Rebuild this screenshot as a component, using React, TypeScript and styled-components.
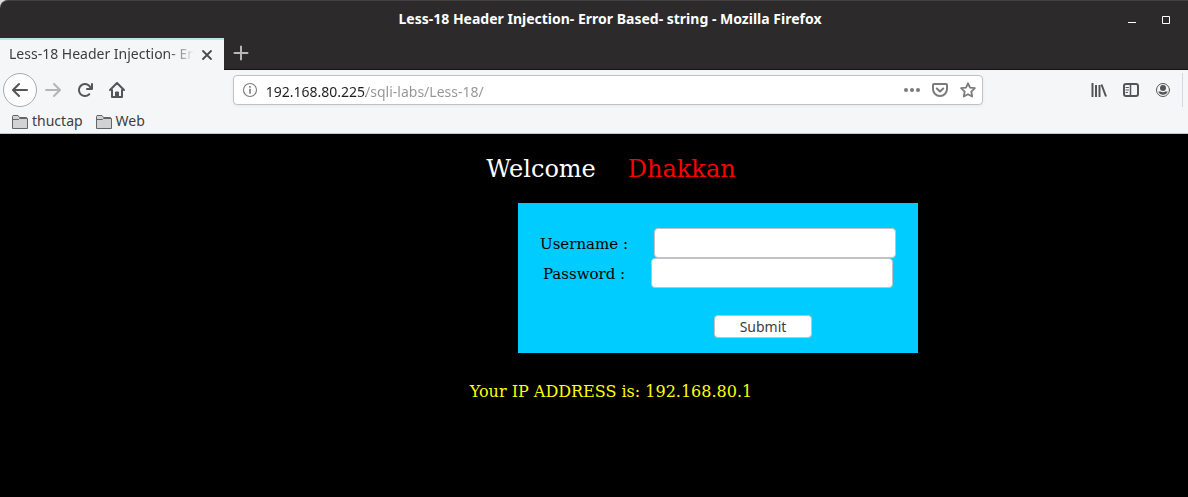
import React from "react";
import styled, { createGlobalStyle } from "styled-components";

const GlobalStyle = createGlobalStyle`
  * { box-sizing: border-box; }
  html, body, #root { min-height: 100vh; }
  body { margin: 0; background: #000; }
  button, input { font: inherit; margin: 0; }
`;

const Browser = styled.div`
  display: flex;
  flex-direction: column;
  min-height: 100vh;
  font-family: "Noto Sans", "Open Sans", sans-serif;
  font-size: 14px;
  line-height: 20px;
  color: #3d3d3d;
`;

const TitleBacking = styled.div`
  background: #dcdcdc;
`;

const TitleBar = styled.header`
  display: grid;
  grid-template-columns: 1fr auto 1fr;
  align-items: center;
  height: 38px;
  padding: 0 12px 0 44px;
  background: #2c2a2b;
  border-top: 1px solid #434142;
  border-top-left-radius: 8px;
`;

const WindowTitle = styled.h1`
  grid-column: 2;
  margin: 0;
  padding-bottom: 2px;
  font-size: 14px;
  line-height: 20px;
  font-weight: 700;
  color: #fff;
`;

const WindowControls = styled.div`
  display: flex;
  justify-content: flex-end;
  gap: 14px;
`;

const PlainButton = styled.button`
  display: inline-flex;
  align-items: center;
  justify-content: center;
  padding: 0;
  border: 0;
  background: none;
  color: inherit;
`;

const WindowButton = styled(PlainButton)`
  width: 20px;
  height: 20px;
  color: #fff;
`;

const TabStrip = styled.div`
  display: flex;
  height: 32px;
  background: #2c2a2b;
  box-shadow: inset 0 -1px #121212;
`;

const Tab = styled.div`
  display: flex;
  align-items: center;
  width: 224px;
  padding: 0 9px;
  gap: 4px;
  background: #f5f6f8;
  border-top: 2px solid #b5e4f2;
`;

const TabLabel = styled.span`
  flex: 1;
  overflow: hidden;
  padding-bottom: 2px;
  white-space: nowrap;
  mask-image: linear-gradient(to left, transparent, #000 28px);
`;

const TabButton = styled(PlainButton)`
  width: 16px;
  height: 16px;
  color: #4a4a4a;
`;

const NewTabButton = styled(PlainButton)`
  width: 34px;
  height: 30px;
  color: #b9b8b8;
`;

const NavBar = styled.nav`
  display: flex;
  align-items: center;
  height: 40px;
  padding: 0 5px 0 3px;
  background: #f5f6f8;
`;

const ToolButton = styled(PlainButton)<{ $muted?: boolean }>`
  flex: none;
  width: 32px;
  height: 32px;
  color: ${(p) => (p.$muted ? "#b4b5b6" : "#555557")};
`;

const BackButton = styled(ToolButton)`
  width: 34px;
  height: 34px;
  border: 1px solid #a9aaac;
  border-radius: 50%;
  background: #fdfdfd;
`;

const Spacer = styled.div`
  flex: 2;
`;

const AddressBar = styled.div`
  flex: 15;
  display: flex;
  align-items: center;
  height: 30px;
  margin: 0 1px;
  padding: 0 0 0 8px;
  background: #fff;
  border: 1px solid #c0c1c5;
  border-radius: 4px;
  box-shadow: 0 1px 3px rgba(0, 0, 0, 0.06);
`;

const AddressInput = styled.input`
  flex: 1;
  min-width: 0;
  height: 22px;
  padding: 2px 8px 0;
  border: 0;
  outline: 0;
  color: transparent;
  caret-color: #222;
  background: linear-gradient(to right, #1f1f1f 108px, #949494 108px);
  background-clip: text;
`;

const AddressButton = styled(PlainButton)`
  width: 28px;
  height: 28px;
  color: #7b7b7c;
`;

const InfoButton = styled(AddressButton)`
  width: 16px;
`;

const ToolbarEdge = styled.div`
  width: 1px;
  height: 34px;
  margin-left: 3px;
  background: #d5d6d9;
`;

const BookmarkBar = styled.div`
  display: flex;
  gap: 13px;
  height: 24px;
  padding: 0 12px;
  background: #f5f6f8;
  border-bottom: 1px solid #c4c5c7;
`;

const Bookmark = styled.a`
  display: flex;
  align-items: center;
  gap: 4px;
  color: #3d3d3d;
  text-decoration: none;
`;

const BookmarkName = styled.span`
  padding-bottom: 2px;
`;

const Page = styled.main`
  flex: 1;
  display: flex;
  flex-direction: column;
  align-items: center;
  padding: 21px 0 20px 34px;
  background: #000;
  font-family: "DejaVu Serif", serif;
  font-size: 16px;
`;

const Greeting = styled.h2`
  display: flex;
  gap: 32px;
  margin: 0;
  font-size: 24px;
  line-height: 28px;
  font-weight: 400;
  color: #fff;
`;

const Name = styled.span`
  color: #f00;
`;

const LoginForm = styled.form`
  display: flex;
  flex-direction: column;
  align-items: center;
  width: 400px;
  height: 150px;
  margin: 20px 0 29px 214px;
  padding-top: 25px;
  background: #0cf;
  color: #000;
  font-size: 15px;
`;

const Field = styled.div`
  display: flex;
  align-items: center;
  gap: 26px;
  height: 30px;
`;

const FieldLabel = styled.label`
  padding-top: 2px;
`;

const FieldInput = styled.input`
  width: 242px;
  height: 30px;
  padding: 0 8px;
  background: #fff;
  border: 1px solid #c2c2c6;
  border-radius: 4px;
`;

const SubmitButton = styled.button`
  width: 98px;
  height: 23px;
  margin: 27px 0 0 90px;
  padding: 0;
  background: #fff;
  border: 1px solid #c2c2c6;
  border-radius: 4px;
  color: #3d3d3d;
  font-family: "Noto Sans", "Open Sans", sans-serif;
  font-size: 14px;
  line-height: 20px;
`;

const Address = styled.p`
  margin: 0;
  line-height: 20px;
  color: #ff0;
`;

const Icon = ({ children, size = 16 }: { children: React.ReactNode; size?: number }) => (
  <svg width={size} height={size} viewBox="0 0 16 16" fill="none" stroke="currentColor" strokeWidth="2" strokeLinecap="round" strokeLinejoin="round" aria-hidden="true">
    {children}
  </svg>
);

const FolderIcon = () => (
  <svg width="16" height="16" viewBox="0 0 16 16" aria-hidden="true">
    <path d="M.5 14.500v-12l.5-1h5l1.500 2h7l1 1v10z" fill="#d1d2d3" stroke="#646566" />
    <path d="M1 5.500h5.500l1-1h7.500" fill="none" stroke="#646566" />
  </svg>
);

export default function App() {
  return (
    <Browser>
      <GlobalStyle />
      <TitleBacking>
        <TitleBar>
          <WindowTitle>Less-18 Header Injection- Error Based- string - Mozilla Firefox</WindowTitle>
          <WindowControls>
            <WindowButton aria-label="Minimize">
              <svg width="8" height="8" viewBox="0 0 8 8"><path d="M0 6.500h8" stroke="currentColor" /></svg>
            </WindowButton>
            <WindowButton aria-label="Maximize">
              <svg width="8" height="8" viewBox="0 0 8 8"><path d="M.5.5h7v7h-7z" fill="none" stroke="currentColor" /></svg>
            </WindowButton>
          </WindowControls>
        </TitleBar>
      </TitleBacking>
      <TabStrip>
        <Tab>
          <TabLabel>Less-18 Header Injection- Error Based- string</TabLabel>
          <TabButton aria-label="Close tab">
            <Icon><path d="M4 4l8 8M12 4l-8 8" strokeWidth="1.800" /></Icon>
          </TabButton>
        </Tab>
        <NewTabButton aria-label="New tab">
          <Icon><path d="M8 1.500v13M1.500 8h13" /></Icon>
        </NewTabButton>
      </TabStrip>
      <NavBar>
        <BackButton aria-label="Back">
          <Icon><path d="M15 8H1.500M7 2L1 8l6 6" /></Icon>
        </BackButton>
        <ToolButton aria-label="Forward" $muted>
          <Icon><path d="M1 8h13.500M9 2l6 6-6 6" /></Icon>
        </ToolButton>
        <ToolButton aria-label="Reload">
          <Icon>
            <path d="M15 1a1 1 0 0 0-1 1v2.418A6.995 6.995 0 1 0 8 15a6.954 6.954 0 0 0 4.950-2.050 1 1 0 0 0-1.414-1.414A5.019 5.019 0 1 1 12.549 6H10a1 1 0 0 0 0 2h5a1 1 0 0 0 1-1V2a1 1 0 0 0-1-1z" fill="currentColor" stroke="none" />
          </Icon>
        </ToolButton>
        <ToolButton aria-label="Home">
          <Icon>
            <path d="M1 8l7-7 7 7M3 8v7h10V8" />
            <path d="M6.500 15v-5h3v5" fill="currentColor" stroke="none" />
            <path d="M6.500 14.500v-4.500h3v4.500" strokeWidth="1" />
          </Icon>
        </ToolButton>
        <Spacer />
        <AddressBar>
          <InfoButton aria-label="Site information">
            <Icon>
              <circle cx="8" cy="8" r="6.500" strokeWidth="1.100" />
              <path d="M8 7.500v3.500M8 4.900v.1" strokeLinecap="square" strokeWidth="1.600" />
            </Icon>
          </InfoButton>
          <AddressInput aria-label="Address" defaultValue="192.168.80.225/sqli-labs/Less-18/" />
          <AddressButton aria-label="Page actions">
            <Icon>
              <g fill="currentColor" stroke="none"><circle cx="2" cy="8" r="2" /><circle cx="8" cy="8" r="2" /><circle cx="14" cy="8" r="2" /></g>
            </Icon>
          </AddressButton>
          <AddressButton aria-label="Save to Pocket">
            <Icon>
              <path d="M2 2h12a1 1 0 0 1 1 1v4a7 7 0 0 1-14 0V3a1 1 0 0 1 1-1z" />
              <path d="M4.800 6.500L8 9.500l3.200-3" />
            </Icon>
          </AddressButton>
          <AddressButton aria-label="Bookmark this page">
            <Icon><path d="M8 1.300l2 4.300 4.900.6-3.600 3.400.9 4.900L8 12.200l-4.200 2.300.9-4.900L1.100 6.200 6 5.600z" strokeWidth="1.800" /></Icon>
          </AddressButton>
        </AddressBar>
        <Spacer />
        <ToolButton aria-label="Library">
          <Icon><path d="M1.500 1v14M5 3v12M8.500 3v12M10.500 2.500l4.500 12" strokeLinecap="butt" /></Icon>
        </ToolButton>
        <ToolButton aria-label="Sidebars">
          <Icon>
            <rect x="1" y="2" width="14" height="12" rx="2" />
            <path d="M7.500 2v12" strokeWidth="1.500" />
            <path d="M3 5.500h2.500M3 8h2.500M3 10.500h1.500" strokeWidth="1" />
          </Icon>
        </ToolButton>
        <ToolButton aria-label="Account">
          <Icon>
            <circle cx="8" cy="8" r="6.500" strokeWidth="1" />
            <circle cx="8" cy="6" r="3" fill="currentColor" stroke="none" />
            <path d="M3.300 9.500h2.200q2.500 1.500 5 0h2.200a5 5 0 0 1-9.400 0z" fill="currentColor" stroke="none" />
          </Icon>
        </ToolButton>
        <ToolbarEdge />
      </NavBar>
      <BookmarkBar>
        <Bookmark href="#thuctap"><FolderIcon /><BookmarkName>thuctap</BookmarkName></Bookmark>
        <Bookmark href="#web"><FolderIcon /><BookmarkName>Web</BookmarkName></Bookmark>
      </BookmarkBar>
      <Page>
        <Greeting>Welcome <Name>Dhakkan</Name></Greeting>
        <LoginForm onSubmit={(e) => e.preventDefault()}>
          <Field>
            <FieldLabel htmlFor="uname">Username :</FieldLabel>
            <FieldInput id="uname" type="text" />
          </Field>
          <Field>
            <FieldLabel htmlFor="passwd">Password :</FieldLabel>
            <FieldInput id="passwd" type="password" />
          </Field>
          <SubmitButton type="submit">Submit</SubmitButton>
        </LoginForm>
        <Address>Your IP ADDRESS is: 192.168.80.1</Address>
      </Page>
    </Browser>
  );
}
